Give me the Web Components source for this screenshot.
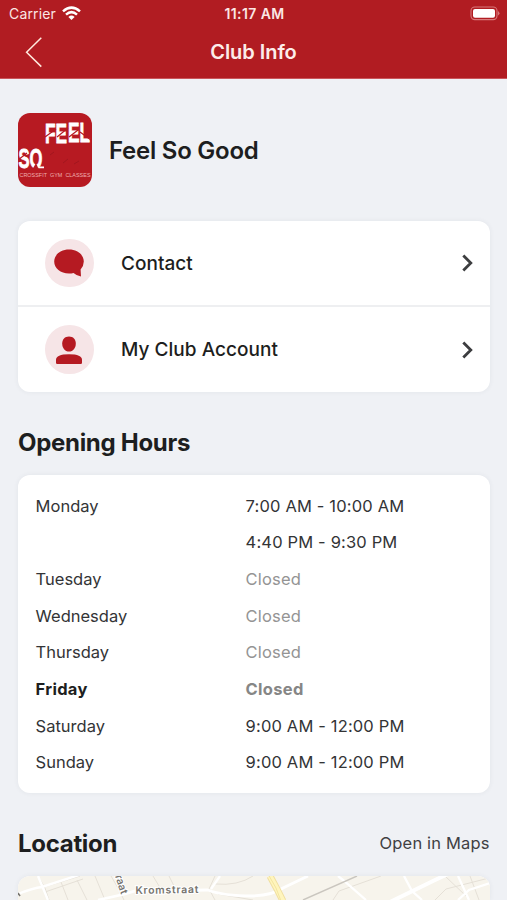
<!DOCTYPE html>
<html lang="en">
<head>
<meta charset="utf-8">
<title>Club Info</title>
<style>
  html, body { margin: 0; height: 900px; overflow: hidden; background: #eff1f5; }
  body { font-family: Inter, "Liberation Sans", sans-serif; color: #1d1e20; }
</style>
</head>
<body>
<club-page></club-page>
<script>
function define(name, html) {
  customElements.define(name, class extends HTMLElement {
    constructor() {
      super();
      const t = document.createElement('template');
      t.innerHTML = html;
      this.attachShadow({ mode: 'open' }).append(t.content.cloneNode(true));
    }
  });
}

define('status-bar', `
<style>
  :host { display: grid; grid-template-columns: 1fr auto 1fr; align-items: center; height: 27px; padding: 0 7px 0 9px; box-sizing: border-box; color: #fbe6e4; font-size: 14px; line-height: 27px; }
  .left { display: flex; align-items: center; gap: 6px; }
  .left span { letter-spacing: .15px; }
  .time { font-weight: 600; letter-spacing: .4px; }
  .right { display: flex; justify-content: flex-end; }
  svg { display: block; }
</style>
<div class="left"><span>Carrier</span>
  <svg width="19" height="15" viewBox="0 0 19 15" fill="none" stroke="#fff" stroke-width="2.5">
    <path d="M1 5.4Q9.5-2.2 18 5.4"/><path d="M4 8.6Q9.5 3.6 15 8.6"/><path d="M6.4 10.9Q9.5 8.3 12.6 10.9L9.5 14Z" fill="#fff" stroke="none"/>
  </svg>
</div>
<span class="time">11:17 AM</span>
<div class="right">
  <svg width="30" height="15" viewBox="0 0 30 15"><rect x="1" y="1" width="26" height="12.6" rx="3.8" fill="none" stroke="#d8797b" stroke-width="1.1"/><rect x="3" y="3" width="22" height="8.7" rx="2" fill="#fff"/><path d="M28.2 5q2.4 2.3 0 4.6z" fill="#e08c8d"/></svg>
</div>`);

define('nav-bar', `
<style>
  :host { display: grid; grid-template-columns: 60px 1fr 60px; align-items: center; height: 50px; }
  svg { display: block; margin-left: 24px; }
  h1 { margin: 0; text-align: center; font-size: 20px; line-height: 24px; font-weight: 600; color: #fdecea; letter-spacing: -.05px; }
</style>
<svg width="20" height="32" viewBox="0 0 20 32" fill="none" stroke="#ffe9dd" stroke-width="1.5"><path d="M17.3 1.7L2.6 16.2L17.3 30.6"/></svg>
<h1><slot></slot></h1>`);

define('club-logo', `
<style>:host { display: block; width: 74px; height: 74px; } svg { display: block; } text { font-family: "Liberation Sans", sans-serif; fill: #fff; }</style>
<svg width="74" height="74" viewBox="0 0 74 74">
  <defs><clipPath id="c"><rect width="74" height="74" rx="12"/></clipPath></defs>
  <g clip-path="url(#c)">
    <rect width="74" height="74" fill="#b71a22"/>
    <g transform="scale(1 1.6)" font-size="17.5" font-weight="700" stroke="#fff" stroke-width=".5">
      <text x="27" y="18.9" textLength="22" lengthAdjust="spacingAndGlyphs">FE</text>
      <text x="50" y="18.1" textLength="22" lengthAdjust="spacingAndGlyphs">EL</text>
      <text x=".5" y="34.3" textLength="24" lengthAdjust="spacingAndGlyphs">SO</text>
    </g>
    <path d="M27 24L38 16M39 24L50 15M51 24L60 17M62 19L73 27M0 47L9 40" stroke="#b71a22" stroke-width="1.2"/>
    <path d="M14 57L18 50L21 57" fill="#b71a22"/><path d="M20.5 54.3H26" stroke="#fff" stroke-width="1.8"/>
    <path d="M45 50l5-4m6 5l5-3M32 42l4-3" stroke="#a2161e" stroke-width="1"/>
    <text x="1.5" y="63.8" font-size="5.4" textLength="71" style="fill:#efb0b0;white-space:pre">CROSSFIT  GYM  CLASSES</text>
  </g>
</svg>`);

define('club-header', `
<style>
  :host { display: flex; align-items: center; gap: 17px; }
  h2 { margin: 2px 0 0; font-size: 24px; line-height: 30px; font-weight: 600; letter-spacing: -.25px; }
</style>
<club-logo></club-logo><h2><slot></slot></h2>`);

define('ui-card', `
<style>:host { display: block; background: #fff; border-radius: 12px; box-shadow: 0 0 5px rgba(60,70,90,.07); overflow: hidden; }</style>
<slot></slot>`);

define('menu-row', `
<style>
  :host { display: flex; align-items: center; box-sizing: border-box; height: 84px; padding: 0 16px 0 27px; }
  .icon { display: grid; place-items: center; width: 48.5px; height: 48.5px; border-radius: 50%; background: #f6e5e7; margin-right: 27.5px; }
  .label { flex: 1; font-size: 19px; line-height: 24px; font-weight: 500; padding-top: 1px; letter-spacing: .03px; }
  svg { display: block; }
</style>
<div class="icon"><slot name="icon"></slot></div>
<span class="label"><slot></slot></span>
<svg width="14" height="20" viewBox="0 0 14 20" fill="none" stroke="#3d3e40" stroke-width="2.8"><path d="M3.3 2.5L10.8 10L3.3 17.5"/></svg>`);

define('section-title', `
<style>
  :host { display: flex; align-items: center; justify-content: space-between; height: 30px; }
  h2 { margin: 1px 0 0; font-size: 24px; line-height: 30px; font-weight: 700; letter-spacing: -.3px; }
  .action { font-size: 16.5px; letter-spacing: .15px; margin-right: .5px; color: #3f4043; }
</style>
<h2><slot></slot></h2><span class="action"><slot name="action"></slot></span>`);

define('hours-row', `
<style>
  :host { display: grid; grid-template-columns: 210px 1fr; height: 36.65px; align-items: center; font-size: 16.5px; line-height: 20px; color: #333436; }
  .time { letter-spacing: .16px; }
  :host([closed]) .time { color: #949494; }
  :host([today]) { font-weight: 700; color: #1d1e20; letter-spacing: .3px; }
  :host([today]) .time { color: #868686; letter-spacing: .3px; }
</style>
<span class="day"><slot name="day"></slot></span><span class="time"><slot></slot></span>`);

define('street-map', `
<style>:host { display: block; height: 24px; } svg { display: block; } text { font-family: Inter, sans-serif; font-weight: 600; fill: #77756f; stroke: #fff; stroke-width: 2; paint-order: stroke; }</style>
<svg width="472" height="24" viewBox="0 0 472 24" fill="none">
  <rect width="472" height="24" fill="#f7f4ec"/>
  <g stroke="#e5e0d7" stroke-width="1">
    <path d="M20 0L27 12L31 24M43 6L50 24M59 4L69 24M77 0L87 24M93 0L100 12L106 24M26 11L62 0M27 16L65 3M135 0L141 10M151 0L156 10M197 24L191 13L197 0M197 8Q220 10 235 0M200 18L235 24M315 24L321 15L363 0M452 0L461 24M427 0L448 20M417 24L428 13L471 2"/>
  </g>
  <g stroke="#fff">
    <path d="M0 18Q15 12 24 11L64-2M20 0L30 24" stroke-width="2.4"/>
    <path d="M80 24L107 18L117 15L190 14Q205 20 235 20Q255 19 265 12L290 0" stroke-width="2.8"/>
    <path d="M193 13L202 0M348 24L325 4L320 0M440 0L451 24M472 7L451 14L440 24M386 0L394 15L404 24" stroke-width="2.3"/>
    <path d="M368 28L415 5L434-4" stroke-width="4"/>
  </g>
  <path d="M252 0L259 13L265 25" stroke="#f0dfa1" stroke-width="7"/><path d="M252 0L259 13L265 25" stroke="#fff5bd" stroke-width="5"/><path d="M250-2L258 12L263 25" stroke="#f3e49f" stroke-width="1"/>
  <path d="M285 24L339 0" stroke="#cac6bf" stroke-width="1.4"/>
  <text x="117.5" y="18" font-size="10.5" textLength="63" transform="rotate(-1 117 18)">Kromstraat</text>
  <text x="97" y="0" font-size="10.5" transform="rotate(72 97 0)">raat</text>
  <path d="M0 17l2 3" stroke="#77756f" stroke-width="1.5"/>
</svg>`);

define('club-page', `
<style>
  :host { display: block; height: 900px; overflow: hidden; }
  header { background: #b11c22; height: 78px; border-bottom: 1px solid #c9565c; }
  main { display: flex; flex-direction: column; padding: 34px 17px 0 18px; }
  .menu { margin-top: 34px; }
  .menu menu-row + menu-row { border-top: 2px solid #eeeff1; height: 87px; }
  .menu svg { margin-left: -.8px; }
  .t1 { margin-top: 35px; }
  .hours { margin-top: 18px; padding: 12.4px 17px 12.6px 17.6px; }
  .t2 { margin-top: 35px; }
  .map { margin-top: 18px; border-radius: 12px 12px 0 0; }
</style>
<header><status-bar></status-bar><nav-bar>Club Info</nav-bar></header>
<main>
  <club-header>Feel So Good</club-header>
  <ui-card class="menu">
    <menu-row>Contact
      <svg slot="icon" width="32" height="30" viewBox="0 0 32 30"><path d="M16 1.5C7.5 1.5 1.2 6.8 1.2 13.6S7.5 25.6 16 25.6Q18.5 25.6 20.5 25Q23.5 27.7 28 28.5L27.6 21.5Q30.8 18 30.8 13.6C30.8 6.8 24.5 1.5 16 1.5Z" fill="#b51a22"/></svg>
    </menu-row>
    <menu-row>My Club Account
      <svg slot="icon" width="28" height="30" viewBox="0 0 28 30" fill="#b51a22"><path d="M14 1.4C9.8 1.4 7.2 4.2 7.2 8.5C7.2 13 10 16.6 14 16.6S20.8 13 20.8 8.5C20.8 4.2 18.2 1.4 14 1.4Z"/><path d="M1 29V24.8Q1 19.2 14 19.2T27 24.8V27.8Q27 29 25.8 29H2.2Q1 29 1 27.8Z"/></svg>
    </menu-row>
  </ui-card>
  <section-title class="t1">Opening Hours</section-title>
  <ui-card class="hours">
    <hours-row><span slot="day">Monday</span>7:00 AM - 10:00 AM</hours-row>
    <hours-row>4:40 PM - 9:30 PM</hours-row>
    <hours-row closed><span slot="day">Tuesday</span>Closed</hours-row>
    <hours-row closed><span slot="day">Wednesday</span>Closed</hours-row>
    <hours-row closed><span slot="day">Thursday</span>Closed</hours-row>
    <hours-row closed today><span slot="day">Friday</span>Closed</hours-row>
    <hours-row><span slot="day">Saturday</span>9:00 AM - 12:00 PM</hours-row>
    <hours-row><span slot="day">Sunday</span>9:00 AM - 12:00 PM</hours-row>
  </ui-card>
  <section-title class="t2">Location<span slot="action">Open in Maps</span></section-title>
  <ui-card class="map"><street-map></street-map></ui-card>
</main>`);
</script>
</body>
</html>
